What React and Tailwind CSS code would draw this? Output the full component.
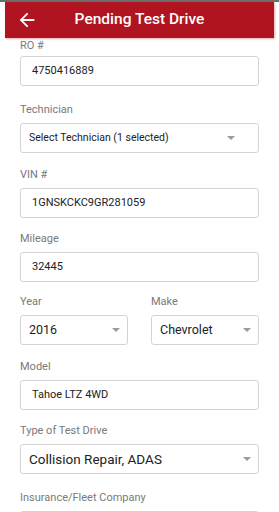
import React from 'react';

const font = { fontFamily: 'Roboto, "Noto Sans", sans-serif' };

function Label({ children, className = '' }) {
    return (
        <div className={`text-[11px] leading-[13px] text-[#7a7a7a] ${className}`}>{children}</div>
    );
}

function Caret() {
    return (
        <span className="w-0 h-0 border-l-[4px] border-r-[4px] border-t-[4px] border-l-transparent border-r-transparent border-t-[#9b9b9b]" />
    );
}

function TextBox({ value }) {
    return (
        <div className="h-[30px] rounded-[3px] border border-[#d4d4d4] bg-white flex items-center pl-[11px] text-[11px] text-[#222]">
            {value}
        </div>
    );
}

function SelectBox({ value, size = 'text-[12.5px]', caretRight = 'pr-[7px]' }) {
    return (
        <div className={`h-[30px] rounded-[3px] border border-[#d4d4d4] bg-white flex items-center justify-between pl-[8px] ${caretRight}`}>
            <span className={`${size} text-[#222]`}>{value}</span>
            <Caret />
        </div>
    );
}

export default function App() {
    return (
        <div className="w-[279px] h-[512px] overflow-hidden bg-white" style={font}>
            <div className="h-[2px] bg-[#6d6d6d]" />
            <div className="mx-[5px] h-[36px] bg-[#af1420] grid grid-cols-[40px_1fr_40px] items-center shadow-[1px_1px_2px_rgba(175,20,32,0.35)]">
                <svg width="22" height="22" viewBox="0 0 24 24" className="ml-[11px]" fill="#fff">
                    <path d="M20 11H7.83l5.59-5.59L12 4l-8 8 8 8 1.41-1.41L7.83 13H20v-2z" />
                </svg>
                <div className="text-center text-white text-[15.5px] font-medium">Pending Test Drive</div>
                <div />
            </div>

            <div className="px-[20px]">
                <Label className="mt-[1px] mb-[4px]">RO #</Label>
                <TextBox value="4750416889" />

                <Label className="mt-[17px] mb-[7px]">Technician</Label>
                <SelectBox value="Select Technician (1 selected)" size="text-[10.5px]" caretRight="pr-[23px]" />

                <Label className="mt-[15px] mb-[7px]">VIN #</Label>
                <TextBox value="1GNSKCKC9GR281059" />

                <Label className="mt-[14px] mb-[7px]">Mileage</Label>
                <TextBox value="32445" />

                <div className="grid grid-cols-[108px_108px] justify-between mt-[13px]">
                    <div>
                        <Label className="mb-[7px]">Year</Label>
                        <SelectBox value="2016" />
                    </div>
                    <div>
                        <Label className="mb-[7px]">Make</Label>
                        <SelectBox value="Chevrolet" />
                    </div>
                </div>

                <Label className="mt-[15px] mb-[7px]">Model</Label>
                <TextBox value="Tahoe LTZ 4WD" />

                <Label className="mt-[14px] mb-[7px]">Type of Test Drive</Label>
                <SelectBox value="Collision Repair, ADAS" size="text-[13.5px]" />

                <Label className="mt-[17px] mb-[7px]">Insurance/Fleet Company</Label>
                <TextBox value="" />
            </div>
        </div>
    );
}
